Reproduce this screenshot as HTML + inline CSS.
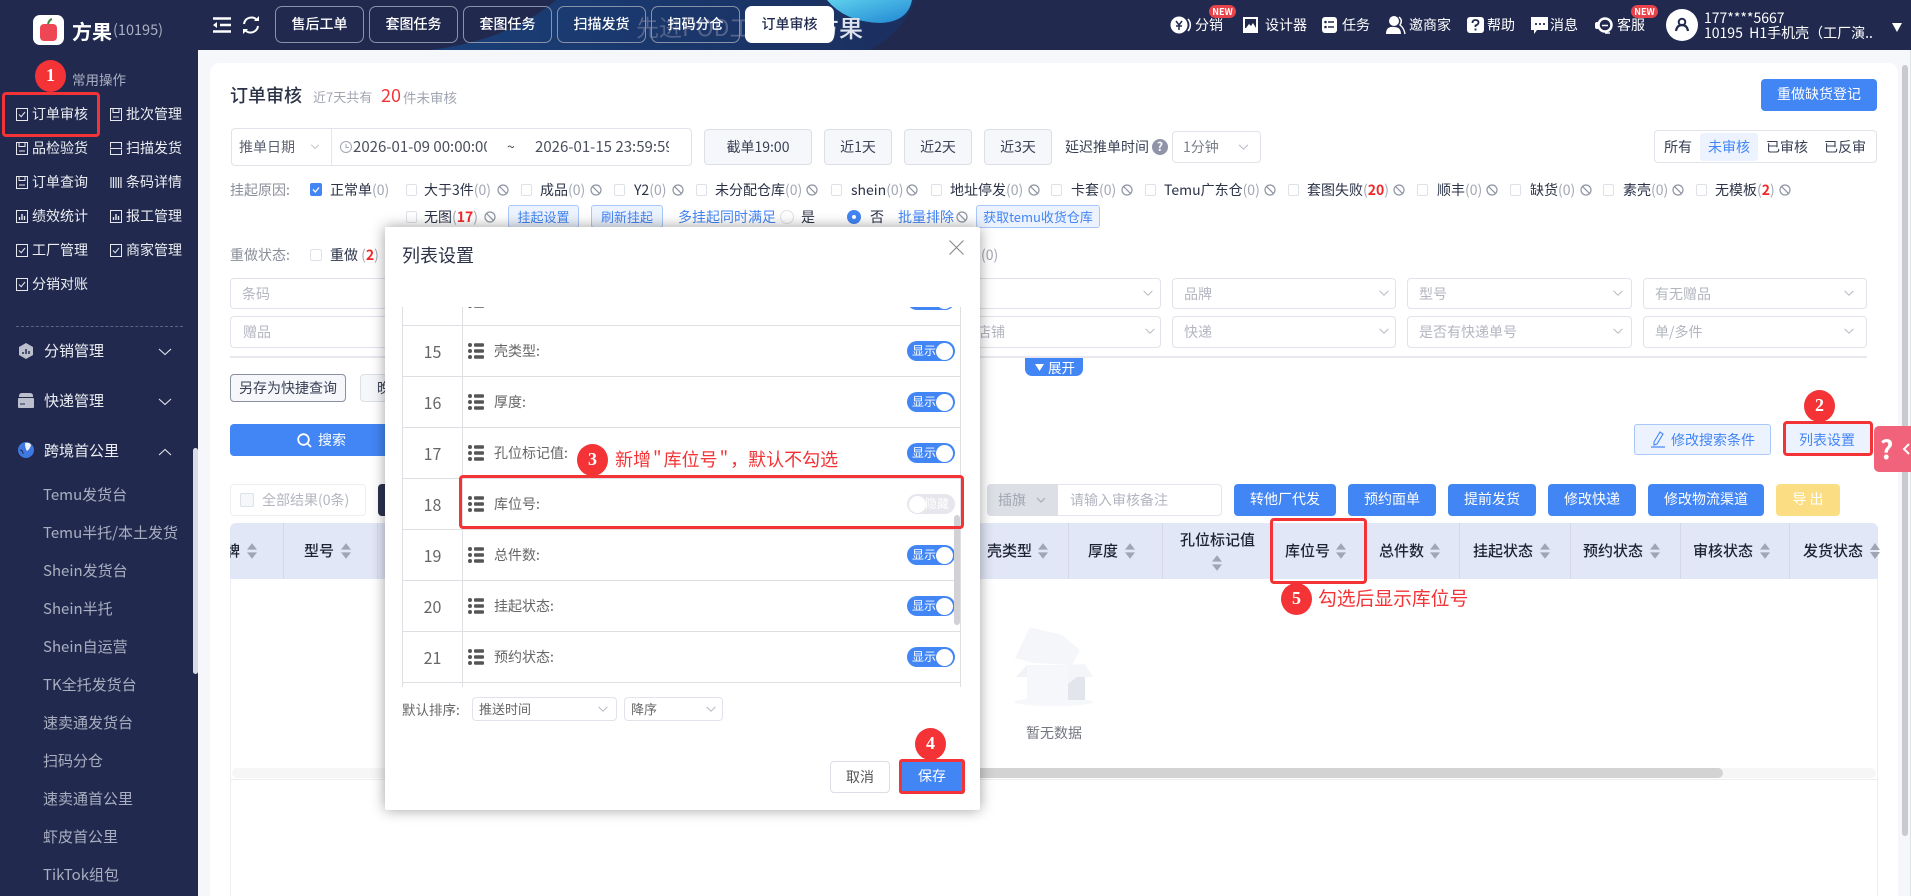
<!DOCTYPE html>
<html lang="zh"><head><meta charset="utf-8"><title>订单审核</title>
<style>
*{box-sizing:border-box;margin:0;padding:0}
html,body{width:1911px;height:896px;overflow:hidden;background:#f5f7fb;font-family:"Noto Sans CJK SC","Liberation Sans",sans-serif;font-size:14px;color:#2b3247}
.t{position:absolute;white-space:nowrap;line-height:20px;height:20px}
.b{position:absolute}
svg{position:absolute;overflow:visible}
.side{color:#eceef3}
.sub{color:#a9afc0;left:43px;font-size:15px}
.tab{position:absolute;top:6px;height:37px;width:89px;border:1px solid #8a92a8;border-radius:7px;color:#fff;text-align:center;line-height:34px;font-weight:500}
.tab.on{background:#fff;color:#20294d;border-color:#fff}
.hd{color:#fff;font-size:14px;top:15px}
.new{position:absolute;top:5px;width:27px;height:13px;border-radius:7px;background:#e8434a;color:#fff;font-size:9px;line-height:13px;text-align:center;font-weight:700}
.cb{position:absolute;width:11px;height:12px;border:1px solid #dfe1e8;border-radius:2px;background:#fff}
.g{color:#a2a6b2}.r{color:#f22828;font-weight:700}
.btn{position:absolute;background:#f5f7fb;border:1px solid #dcdfe6;border-radius:4px;text-align:center;color:#3a4054}
.blue{position:absolute;background:#4285f4;border-radius:4px;color:#fff;text-align:center;height:32px;line-height:31px;top:484px}
.lb{position:absolute;background:#edf3fe;border:1px solid #a9c8fa;border-radius:3px;color:#4285f4;text-align:center;font-size:13px;top:205px;height:23px;line-height:21px}
.in{position:absolute;border:1px solid #e1e2ea;border-radius:4px;background:#fff;color:#b3b6c0}
.in span{position:absolute;left:11px;top:5px;line-height:20px}
.th{color:#1d2333;font-size:15px;font-weight:500;top:541px}
.sp{position:absolute;top:523px;width:1px;height:56px;background:#d5d9e6}
.m{position:absolute;background:#fff}
.num{position:absolute;left:403px;width:59px;text-align:center;color:#666;font-size:16px;line-height:20px}
.lab{position:absolute;left:494px;color:#666;font-size:14px;line-height:20px;white-space:nowrap}
.tg{position:absolute;left:907px;width:48px;height:20px;border-radius:10px;background:#4285f4;color:#fff;font-size:12px;line-height:20px;padding-left:5px}
.tg:after{content:"";position:absolute;right:2px;top:1.5px;width:17px;height:17px;border-radius:50%;background:#fff}
.tg.off{background:#e6e6ec;color:#fff;padding-left:18px}
.tg.off:after{right:auto;left:2px}
.hl{position:absolute;left:403px;width:557px;height:1px;background:#dedfe3}
.c{position:absolute;background:#f33336;border-radius:50%;color:#fff;text-align:center;font:700 18px/31px "Liberation Serif","Noto Serif CJK SC",serif;width:31px;height:32px}
.rb{position:absolute;border:3px solid #f33336;border-radius:4px}
.rt{position:absolute;color:#f33336;font-size:18px;line-height:24px;white-space:nowrap}
</style></head><body>
<svg width="0" height="0" style="position:absolute"><defs>
<symbol id="ban" viewBox="0 0 12 12"><circle cx="6" cy="6" r="5" fill="none" stroke="#8f94a3" stroke-width="1.2"/><path d="M2.6 2.6l6.8 6.8" stroke="#8f94a3" stroke-width="1.2"/></symbol>
<symbol id="ch" viewBox="0 0 12 8"><path d="M1 1l5 5 5-5" fill="none" stroke="#b4b7c1" stroke-width="1.1"/></symbol>
<symbol id="sort" viewBox="0 0 11 17"><path d="M5.5 0L11 7H0zM5.5 17L0 10h11z" fill="#a0a5b4"/></symbol>
<symbol id="drag" viewBox="0 0 16 16"><g fill="#555"><circle cx="2" cy="2" r="2"/><circle cx="2" cy="8" r="2"/><circle cx="2" cy="14" r="2"/><rect x="6" y=".2" width="10" height="3.6" rx="1"/><rect x="6" y="6.2" width="10" height="3.6" rx="1"/><rect x="6" y="12.2" width="10" height="3.6" rx="1"/></g></symbol>
<symbol id="ck" viewBox="0 0 12 13"><rect x=".5" y=".5" width="11" height="12" fill="none" stroke="#e6e8ee"/><path d="M3 6.5l2.2 2.2L9 4" fill="none" stroke="#e6e8ee"/></symbol>
<symbol id="bk" viewBox="0 0 12 13"><rect x=".5" y=".5" width="11" height="12" fill="none" stroke="#e6e8ee"/><path d="M3 .5v4h6v-4M3 9h6" fill="none" stroke="#e6e8ee"/></symbol>
<symbol id="sc" viewBox="0 0 12 13"><path d="M.5 5.5v-5h11v5M.5 7.5v5h11v-5M0 6.5h12" fill="none" stroke="#e6e8ee"/></symbol>
<symbol id="bar" viewBox="0 0 12 13"><path d="M1 1v11M3.5 1v11M6 1v11M8.5 1v11M11 1v11" stroke="#e6e8ee" stroke-width="1.2"/></symbol>
<symbol id="st" viewBox="0 0 12 13"><rect x=".5" y=".5" width="11" height="12" fill="none" stroke="#e6e8ee"/><path d="M3.5 10V7M6 10V4M8.5 10V6" stroke="#e6e8ee" stroke-width="1.4"/></symbol>
</defs></svg>

<!-- header -->
<div class="b" style="left:0;top:0;width:1911px;height:50px;background:#212a4e"></div>
<svg style="left:0;top:0" width="1911" height="50"><defs><linearGradient id="gd" x1="0" x2="1" y1="0" y2="0"><stop offset="0" stop-color="#1a3f78"/><stop offset="1" stop-color="#1b2f5e"/></linearGradient><linearGradient id="gl" x1="0" x2="1" y1="0" y2="1"><stop offset="0" stop-color="#5fd0ee"/><stop offset="1" stop-color="#1f86d2"/></linearGradient></defs>
<path d="M430 50Q510 40 556 0H915Q905 30 870 50Z" fill="url(#gd)"/><path d="M827 0H912Q908 22 880 23Q845 22 827 0Z" fill="url(#gl)"/></svg>
<div class="t" style="left:636px;top:16px;font-size:23px;color:#56638a">先进POD工厂</div>
<div class="t" style="left:815px;top:15px;font-size:24px;line-height:24px;height:24px;color:#dfe3ee;font-weight:500">方果</div>

<div class="b" style="left:33px;top:15px;width:31px;height:30px;background:#fff;border-radius:7px"></div>
<svg style="left:33px;top:15px" width="31" height="30"><rect x="7" y="9" width="17" height="17" rx="4" fill="#ef4655"/><path d="M15 9q1-4 4-5" fill="none" stroke="#3f8a3c" stroke-width="2"/></svg>
<div class="t" style="left:72px;top:21px;font-size:20px;font-weight:700;color:#fff">方果</div>
<div class="t" style="left:113px;top:20px;font-size:14.5px;color:#aab0c2">(10195)</div>
<svg style="left:213px;top:17px" width="18" height="16"><path d="M0 1.5h18M7 8h11M0 14.5h18" stroke="#fff" stroke-width="2.4"/><path d="M0 8l4-3v6z" fill="#fff"/></svg>
<svg style="left:242px;top:16px" width="18" height="18"><path d="M15 4A7.5 7.5 0 0 0 2 8M3 14a7.5 7.5 0 0 0 13-4" fill="none" stroke="#fff" stroke-width="2"/><path d="M12 5h5V0zM6 13H1v5z" fill="#fff"/></svg>
<div class="tab" style="left:275px">售后工单</div>
<div class="tab" style="left:369px">套图任务</div>
<div class="tab" style="left:463px">套图任务</div>
<div class="tab" style="left:557px">扫描发货</div>
<div class="tab" style="left:651px">扫码分仓</div>
<div class="tab on" style="left:745px">订单审核</div>

<svg style="left:1170px;top:16px" width="22" height="18"><circle cx="9" cy="9" r="8.5" fill="#fff"/><path d="M18 3a9 9 0 0 1 0 12" fill="none" stroke="#fff" stroke-width="1.6"/><path d="M6 5l3 4 3-4M9 9v5M6 10h6" fill="none" stroke="#212a4e" stroke-width="1.5"/></svg>
<div class="t hd" style="left:1195px">分销</div><div class="new" style="left:1209px">NEW</div>
<svg style="left:1243px;top:17px" width="15" height="16"><rect width="15" height="16" fill="#fff"/><rect x="2" y="2" width="11" height="9" fill="#212a4e"/><path d="M3 11l3-4 2 2 2-3 3 5z" fill="#fff"/></svg>
<div class="t hd" style="left:1265px">设计器</div>
<svg style="left:1322px;top:17px" width="15" height="16"><rect width="15" height="16" rx="3" fill="#fff"/><path d="M6 5h6M6 10h6" stroke="#212a4e" stroke-width="1.6"/><circle cx="3.5" cy="5" r="1.3" fill="#212a4e"/><circle cx="3.5" cy="10" r="1.3" fill="#212a4e"/></svg>
<div class="t hd" style="left:1342px">任务</div>
<svg style="left:1386px;top:16px" width="20" height="18"><circle cx="8" cy="5" r="5" fill="#fff"/><path d="M0 18q0-8 8-7q7 0 7 7z" fill="#fff"/><path d="M13 1q4 3 1 8q4 3 5 9" fill="none" stroke="#fff" stroke-width="1.4"/></svg>
<div class="t hd" style="left:1409px">邀商家</div>
<svg style="left:1467px;top:17px" width="17" height="16"><rect width="17" height="16" rx="3" fill="#fff"/><path d="M5.5 6q0-3 3-3t3 2.500q0 2-3 3v1.500M8.500 11.500v2" fill="none" stroke="#212a4e" stroke-width="1.8"/></svg>
<div class="t hd" style="left:1487px">帮助</div>
<svg style="left:1531px;top:17px" width="17" height="17"><path d="M0 0h17v13H6l-3 4v-4H0z" fill="#fff"/><path d="M4 7h2M8 7h2M12 7h2" stroke="#212a4e" stroke-width="1.8"/></svg>
<div class="t hd" style="left:1550px">消息</div>
<svg style="left:1595px;top:16px" width="19" height="18"><circle cx="10" cy="9" r="6.500" fill="none" stroke="#fff" stroke-width="2.500"/><rect x="0" y="6" width="4" height="7" rx="2" fill="#fff"/><path d="M7 9.500h6" stroke="#fff" stroke-width="1.500"/><path d="M10 17h5" stroke="#fff" stroke-width="1.500"/></svg>
<div class="t hd" style="left:1617px">客服</div><div class="new" style="left:1631px">NEW</div>
<div class="b" style="left:1666px;top:9px;width:32px;height:32px;border-radius:50%;background:#fff"></div>
<svg style="left:1675px;top:17px" width="14" height="15"><circle cx="7" cy="5" r="3.300" fill="none" stroke="#212a4e" stroke-width="2"/><path d="M1 14q1-6 6-6t6 6" fill="none" stroke="#212a4e" stroke-width="2.200"/></svg>
<div class="t" style="left:1704px;top:8px;color:#fff;font-size:14px">177****5667</div>
<div class="t" style="left:1704px;top:23px;color:#fff;font-size:14px;width:170px;overflow:hidden">10195&nbsp; H1手机壳（工厂演...</div>
<svg style="left:1892px;top:23px" width="10" height="9"><path d="M0 0h10L5 9z" fill="#fff"/></svg>

<!-- sidebar -->
<div class="b" style="left:0;top:50px;width:198px;height:846px;background:#212a4e"></div>
<div class="t" style="left:72px;top:69px;color:#aab0c2;font-size:13.500px">常用操作</div>
<svg style="left:16px;top:108px" width="12" height="13"><use href="#ck"/></svg><div class="t side" style="left:32px;top:104px">订单审核</div>
<svg style="left:110px;top:108px" width="12" height="13"><use href="#bk"/></svg><div class="t side" style="left:126px;top:104px">批次管理</div>
<svg style="left:16px;top:142px" width="12" height="13"><use href="#bk"/></svg><div class="t side" style="left:32px;top:138px">品检验货</div>
<svg style="left:110px;top:142px" width="12" height="13"><use href="#sc"/></svg><div class="t side" style="left:126px;top:138px">扫描发货</div>
<svg style="left:16px;top:176px" width="12" height="13"><use href="#bk"/></svg><div class="t side" style="left:32px;top:172px">订单查询</div>
<svg style="left:110px;top:176px" width="12" height="13"><use href="#bar"/></svg><div class="t side" style="left:126px;top:172px">条码详情</div>
<svg style="left:16px;top:210px" width="12" height="13"><use href="#st"/></svg><div class="t side" style="left:32px;top:206px">绩效统计</div>
<svg style="left:110px;top:210px" width="12" height="13"><use href="#st"/></svg><div class="t side" style="left:126px;top:206px">报工管理</div>
<svg style="left:16px;top:244px" width="12" height="13"><use href="#ck"/></svg><div class="t side" style="left:32px;top:240px">工厂管理</div>
<svg style="left:110px;top:244px" width="12" height="13"><use href="#ck"/></svg><div class="t side" style="left:126px;top:240px">商家管理</div>
<svg style="left:16px;top:278px" width="12" height="13"><use href="#ck"/></svg><div class="t side" style="left:32px;top:274px">分销对账</div>
<div class="b" style="left:16px;top:326px;width:167px;border-top:1px dashed #5b6480"></div>

<svg style="left:19px;top:343px" width="14" height="16"><path d="M7 0l7 4v8l-7 4-7-4V4z" fill="#bcc0cc"/><path d="M4 11V9M7 11V6M10 11V8" stroke="#212a4e" stroke-width="1.500"/></svg>
<div class="t side" style="left:44px;top:341px;font-size:15px">分销管理</div>
<svg style="left:159px;top:348px" width="12" height="8"><path d="M0 1l6 5.500L12 1" fill="none" stroke="#e3e5ec" stroke-width="1.100"/></svg>
<svg style="left:18px;top:393px" width="16" height="15"><path d="M1 3q0-3 3-3h8q3 0 3 3v1H1z" fill="#bcc0cc"/><rect x="0" y="5" width="16" height="10" rx="1" fill="#bcc0cc"/><path d="M2 11h5" stroke="#212a4e"/></svg>
<div class="t side" style="left:44px;top:391px;font-size:15px">快递管理</div>
<svg style="left:159px;top:398px" width="12" height="8"><path d="M0 1l6 5.500L12 1" fill="none" stroke="#e3e5ec" stroke-width="1.100"/></svg>
<svg style="left:18px;top:442px" width="16" height="16"><circle cx="8" cy="8" r="8" fill="#3f78e0"/><path d="M7 1q5-1 6 2q-1 4-4 6Q7 6 7 1z" fill="#f1f3f8"/><path d="M2 8q3 0 3 4" fill="none" stroke="#212a4e"/></svg>
<div class="t side" style="left:44px;top:441px;font-size:15px">跨境首公里</div>
<svg style="left:159px;top:448px" width="12" height="8"><path d="M0 7L6 1.500 12 7" fill="none" stroke="#e3e5ec" stroke-width="1.100"/></svg>
<div class="t sub" style="top:485px">Temu发货台</div>
<div class="t sub" style="top:523px">Temu半托/本土发货</div>
<div class="t sub" style="top:561px">Shein发货台</div>
<div class="t sub" style="top:599px">Shein半托</div>
<div class="t sub" style="top:637px">Shein自运营</div>
<div class="t sub" style="top:675px">TK全托发货台</div>
<div class="t sub" style="top:713px">速卖通发货台</div>
<div class="t sub" style="top:751px">扫码分仓</div>
<div class="t sub" style="top:789px">速卖通首公里</div>
<div class="t sub" style="top:827px">虾皮首公里</div>
<div class="t sub" style="top:865px">TikTok组包</div>
<div class="b" style="left:193px;top:448px;width:5px;height:226px;border-radius:3px;background:#d9dce4"></div>

<!-- card -->
<div class="b" style="left:210px;top:63px;width:1688px;height:833px;background:#fff;border-radius:10px 10px 0 0"></div>
<div class="b" style="left:1902px;top:65px;width:6px;height:771px;background:#c9c9cf;border-radius:3px"></div>
<div class="b" style="left:1910px;top:50px;width:1px;height:846px;background:#dfe5e5"></div>

<div class="t" style="left:230px;top:85px;font-size:18px;color:#2b3247;font-weight:500">订单审核</div>
<div class="t" style="left:313px;top:87px;font-size:13px;color:#a2a6b2">近7天共有</div>
<div class="t" style="left:381px;top:85px;font-size:18px;color:#f33336">20</div>
<div class="t" style="left:403px;top:87px;font-size:13.500px;color:#a2a6b2">件未审核</div>
<div class="b" style="left:1761px;top:79px;width:116px;height:32px;background:#4285f4;border-radius:4px;color:#fff;text-align:center;line-height:31px">重做缺货登记</div>

<!-- date row -->
<div class="in" style="left:231px;top:128px;width:461px;height:38px"></div>
<div class="b" style="left:331px;top:129px;width:1px;height:36px;background:#e4e5ee"></div>
<div class="t" style="left:239px;top:137px;color:#5c6170">推单日期</div>
<svg style="left:310px;top:144px" width="10" height="6"><use href="#ch"/></svg>
<svg style="left:340px;top:141px" width="12" height="12"><circle cx="6" cy="6" r="5.500" fill="none" stroke="#a2a6b2"/><path d="M6 3v3.500h3" fill="none" stroke="#a2a6b2"/></svg>
<div class="t" style="left:353px;top:137px;width:134px;overflow:hidden;color:#4a4f5e;font-size:15px">2026-01-09 00:00:00</div>
<div class="t" style="left:507px;top:137px;color:#4a4f5e">~</div>
<div class="t" style="left:535px;top:137px;width:134px;overflow:hidden;color:#4a4f5e;font-size:15px">2026-01-15 23:59:59</div>
<div class="btn" style="left:704px;top:129px;width:108px;height:36px;line-height:34px">截单19:00</div>
<div class="btn" style="left:824px;top:129px;width:68px;height:36px;line-height:34px">近1天</div>
<div class="btn" style="left:904px;top:129px;width:68px;height:36px;line-height:34px">近2天</div>
<div class="btn" style="left:984px;top:129px;width:68px;height:36px;line-height:34px">近3天</div>
<div class="t" style="left:1065px;top:137px;color:#3a4054">延迟推单时间</div>
<div class="b" style="left:1152px;top:139px;width:16px;height:16px;border-radius:50%;background:#8f94a8;color:#fff;font-size:12px;line-height:16px;text-align:center;font-weight:700">?</div>
<div class="in" style="left:1172px;top:131px;width:89px;height:32px"></div>
<div class="t" style="left:1183px;top:137px;color:#7a7e8a">1分钟</div>
<svg style="left:1238px;top:144px" width="11" height="7"><use href="#ch"/></svg>
<div class="in" style="left:1654px;top:130px;width:223px;height:33px"></div>
<div class="b" style="left:1700px;top:133px;width:58px;height:28px;border-radius:3px;background:#edf3fe"></div>
<div class="t" style="left:1664px;top:137px;color:#3a4054">所有</div>
<div class="t" style="left:1708px;top:137px;color:#4285f4">未审核</div>
<div class="t" style="left:1766px;top:137px;color:#3a4054">已审核</div>
<div class="t" style="left:1824px;top:137px;color:#3a4054">已反审</div>

<!-- suspend reasons -->
<div class="t" style="left:230px;top:180px;color:#8a8e9a">挂起原因:</div>
<div class="b" style="left:310px;top:183px;width:12px;height:13px;border-radius:2px;background:#4285f4"></div>
<svg style="left:310px;top:183px" width="12" height="13"><path d="M3 6.500l2.300 2.500L9 4.500" fill="none" stroke="#fff" stroke-width="1.300"/></svg>
<div class="t" style="left:330px;top:180px">正常单<span class="g">(0)</span></div>

<div class="cb" style="left:406px;top:184px"></div><div class="t" style="left:424px;top:180px">大于3件<span class="g">(0)</span></div><svg style="left:497px;top:184px" width="12" height="12"><use href="#ban"/></svg>
<div class="cb" style="left:521px;top:184px"></div><div class="t" style="left:540px;top:180px">成品<span class="g">(0)</span></div><svg style="left:590px;top:184px" width="12" height="12"><use href="#ban"/></svg>
<div class="cb" style="left:614px;top:184px"></div><div class="t" style="left:634px;top:180px">Y2<span class="g">(0)</span></div><svg style="left:672px;top:184px" width="12" height="12"><use href="#ban"/></svg>
<div class="cb" style="left:696px;top:184px"></div><div class="t" style="left:715px;top:180px">未分配仓库<span class="g">(0)</span></div><svg style="left:806px;top:184px" width="12" height="12"><use href="#ban"/></svg>
<div class="cb" style="left:831px;top:184px"></div><div class="t" style="left:851px;top:180px">shein<span class="g">(0)</span></div><svg style="left:906px;top:184px" width="12" height="12"><use href="#ban"/></svg>
<div class="cb" style="left:931px;top:184px"></div><div class="t" style="left:950px;top:180px">地址停发<span class="g">(0)</span></div><svg style="left:1028px;top:184px" width="12" height="12"><use href="#ban"/></svg>
<div class="cb" style="left:1051px;top:184px"></div><div class="t" style="left:1071px;top:180px">卡套<span class="g">(0)</span></div><svg style="left:1121px;top:184px" width="12" height="12"><use href="#ban"/></svg>
<div class="cb" style="left:1145px;top:184px"></div><div class="t" style="left:1164px;top:180px">Temu广东仓<span class="g">(0)</span></div><svg style="left:1264px;top:184px" width="12" height="12"><use href="#ban"/></svg>
<div class="cb" style="left:1288px;top:184px"></div><div class="t" style="left:1307px;top:180px">套图失败<span class="g">(</span><span class="r">20</span><span class="g">)</span></div><svg style="left:1393px;top:184px" width="12" height="12"><use href="#ban"/></svg>
<div class="cb" style="left:1417px;top:184px"></div><div class="t" style="left:1437px;top:180px">顺丰<span class="g">(0)</span></div><svg style="left:1486px;top:184px" width="12" height="12"><use href="#ban"/></svg>
<div class="cb" style="left:1510px;top:184px"></div><div class="t" style="left:1530px;top:180px">缺货<span class="g">(0)</span></div><svg style="left:1580px;top:184px" width="12" height="12"><use href="#ban"/></svg>
<div class="cb" style="left:1603px;top:184px"></div><div class="t" style="left:1623px;top:180px">素壳<span class="g">(0)</span></div><svg style="left:1672px;top:184px" width="12" height="12"><use href="#ban"/></svg>
<div class="cb" style="left:1696px;top:184px"></div><div class="t" style="left:1715px;top:180px">无模板<span class="g">(</span><span class="r">2</span><span class="g">)</span></div><svg style="left:1779px;top:184px" width="12" height="12"><use href="#ban"/></svg>

<div class="cb" style="left:406px;top:211px"></div><div class="t" style="left:424px;top:207px">无图<span class="g">(</span><span class="r">17</span><span class="g">)</span></div><svg style="left:484px;top:211px" width="12" height="12"><use href="#ban"/></svg>
<div class="lb" style="left:508px;width:71px">挂起设置</div>
<div class="lb" style="left:591px;width:72px">刷新挂起</div>
<div class="t" style="left:678px;top:207px;color:#4285f4">多挂起同时满足</div>
<div class="b" style="left:780px;top:210px;width:14px;height:14px;border-radius:50%;border:1px solid #dfe1e8"></div>
<div class="t" style="left:801px;top:207px">是</div>
<div class="b" style="left:847px;top:210px;width:14px;height:14px;border-radius:50%;background:#4285f4"></div>
<div class="b" style="left:852px;top:215px;width:4px;height:4px;border-radius:50%;background:#fff"></div>
<div class="t" style="left:870px;top:207px">否</div>
<div class="t" style="left:898px;top:207px;color:#4285f4">批量排除</div><svg style="left:956px;top:211px" width="12" height="12"><use href="#ban"/></svg>
<div class="lb" style="left:976px;width:124px">获取temu收货仓库</div>

<!-- redo -->
<div class="t" style="left:230px;top:245px;color:#8a8e9a">重做状态:</div>
<div class="cb" style="left:310px;top:249px;width:12px"></div>
<div class="t" style="left:330px;top:245px">重做 <span class="g">(</span><span class="r">2</span><span class="g">)</span></div>
<div class="t g" style="left:981px;top:245px">(0)</div>

<!-- filter rows -->
<div class="in" style="left:230px;top:278px;width:931px;height:31px"><span>条码</span></div>
<svg style="left:1142px;top:290px" width="12" height="7"><use href="#ch"/></svg>
<div class="in" style="left:1172px;top:278px;width:224px;height:31px"><span>品牌</span></div><svg style="left:1378px;top:290px" width="12" height="7"><use href="#ch"/></svg>
<div class="in" style="left:1407px;top:278px;width:225px;height:31px"><span>型号</span></div><svg style="left:1612px;top:290px" width="12" height="7"><use href="#ch"/></svg>
<div class="in" style="left:1643px;top:278px;width:224px;height:31px"><span>有无赠品</span></div><svg style="left:1843px;top:290px" width="12" height="7"><use href="#ch"/></svg>
<div class="in" style="left:230px;top:316px;width:931px;height:32px"><span style="left:12px">赠品</span><span style="left:746px">店铺</span></div>
<svg style="left:1144px;top:328px" width="12" height="7"><use href="#ch"/></svg>
<div class="in" style="left:1172px;top:316px;width:224px;height:32px"><span>快递</span></div><svg style="left:1378px;top:328px" width="12" height="7"><use href="#ch"/></svg>
<div class="in" style="left:1407px;top:316px;width:225px;height:32px"><span>是否有快递单号</span></div><svg style="left:1612px;top:328px" width="12" height="7"><use href="#ch"/></svg>
<div class="in" style="left:1643px;top:316px;width:224px;height:32px"><span>单/多件</span></div><svg style="left:1843px;top:328px" width="12" height="7"><use href="#ch"/></svg>
<div class="b" style="left:230px;top:356px;width:1637px;height:2px;background:#e8e8ee"></div>
<div class="b" style="left:1025px;top:358px;width:58px;height:18px;background:#4285f4;border-radius:0 0 7px 7px"></div>
<svg style="left:1035px;top:364px" width="9" height="7"><path d="M0 0h9L4.500 7z" fill="#fff"/></svg>
<div class="t" style="left:1048px;top:357px;color:#fff;font-size:13.500px">展开</div>

<!-- action row -->
<div class="btn" style="left:230px;top:374px;width:116px;height:28px;line-height:26px;border-color:#8a90a0">另存为快捷查询</div>
<div class="btn" style="left:360px;top:374px;width:100px;height:28px;line-height:26px;text-align:left;padding-left:16px">晚</div>
<div class="b" style="left:230px;top:424px;width:200px;height:32px;background:#4285f4;border-radius:4px"></div>
<svg style="left:297px;top:433px" width="15" height="15"><circle cx="6.500" cy="6.500" r="5.300" fill="none" stroke="#fff" stroke-width="1.800"/><path d="M10.500 10.500l3.500 3.500" stroke="#fff" stroke-width="1.800"/></svg>
<div class="t" style="left:318px;top:430px;color:#fff">搜索</div>
<div class="b" style="left:1634px;top:424px;width:137px;height:31px;background:#edf3fe;border:1px solid #a9c8fa;border-radius:3px"></div>
<svg style="left:1651px;top:431px" width="14" height="17"><path d="M3 11L9 1l3 2-6 10-3 1z" fill="none" stroke="#4285f4" stroke-width="1.100"/><path d="M0 16h14" stroke="#4285f4" stroke-width="1.200"/></svg>
<div class="t" style="left:1671px;top:430px;color:#4285f4">修改搜索条件</div>
<div class="b" style="left:1785px;top:423px;width:86px;height:31px;background:#edf3fe"></div>
<div class="t" style="left:1799px;top:430px;color:#4285f4">列表设置</div>
<div class="b" style="left:1874px;top:426px;width:37px;height:46px;background:#f0637a;border-radius:5px 0 0 5px"></div>
<div class="t" style="left:1880px;top:437px;color:#fff;font-size:26px;font-weight:700;line-height:24px;height:24px">?</div>
<svg style="left:1903px;top:444px" width="7" height="10"><path d="M6 0L1 5l5 5" fill="none" stroke="#fff" stroke-width="2"/></svg>

<!-- toolbar -->
<div class="in" style="left:230px;top:484px;width:136px;height:32px;border-color:#eceef3"></div>
<div class="b" style="left:240px;top:493px;width:14px;height:14px;border:1px solid #dfe1e8;background:#f5f7fb;border-radius:2px"></div>
<div class="t" style="left:262px;top:490px;color:#b3b6c0">全部结果(0条)</div>
<div class="b" style="left:378px;top:484px;width:40px;height:32px;background:#2c3350;border-radius:4px"></div>
<div class="in" style="left:987px;top:484px;width:235px;height:32px;border-color:#e4e5ee"></div>
<div class="b" style="left:987px;top:484px;width:71px;height:32px;background:#dcdfe6;border-radius:4px 0 0 4px"></div>
<div class="t" style="left:998px;top:490px;color:#a2a6b2">插旗</div>
<svg style="left:1036px;top:497px" width="10" height="6"><path d="M1 1l4 4 4-4" fill="none" stroke="#a2a6b2"/></svg>
<div class="t" style="left:1070px;top:490px;color:#b3b6c0">请输入审核备注</div>
<div class="blue" style="left:1234px;width:102px">转他厂代发</div>
<div class="blue" style="left:1348px;width:88px">预约面单</div>
<div class="blue" style="left:1448px;width:88px">提前发货</div>
<div class="blue" style="left:1548px;width:88px">修改快递</div>
<div class="blue" style="left:1648px;width:116px">修改物流渠道</div>
<div class="blue" style="left:1776px;width:64px;background:#fbdd83">导 出</div>

<!-- table -->
<div class="b" style="left:230px;top:523px;width:1648px;height:56px;background:#e2e7f7;border-radius:6px 6px 0 0"></div>
<div class="sp" style="left:283px"></div><div class="sp" style="left:377px"></div>
<div class="sp" style="left:1068px"></div><div class="sp" style="left:1162px"></div><div class="sp" style="left:1271px"></div><div class="sp" style="left:1365px"></div><div class="sp" style="left:1459px"></div><div class="sp" style="left:1570px"></div><div class="sp" style="left:1680px"></div><div class="sp" style="left:1789px"></div>
<div class="t th" style="left:230px;width:10px;overflow:hidden"><span style="position:absolute;right:0">牌</span></div><svg style="left:247px;top:543px" width="10" height="16"><use href="#sort"/></svg>
<div class="t th" style="left:304px">型号</div><svg style="left:341px;top:543px" width="10" height="16"><use href="#sort"/></svg>
<div class="t th" style="left:987px">壳类型</div><svg style="left:1038px;top:543px" width="10" height="16"><use href="#sort"/></svg>
<div class="t th" style="left:1088px">厚度</div><svg style="left:1125px;top:543px" width="10" height="16"><use href="#sort"/></svg>
<div class="t th" style="left:1180px;top:530px">孔位标记值</div><svg style="left:1212px;top:555px" width="10" height="16"><use href="#sort"/></svg>
<div class="t th" style="left:1285px">库位号</div><svg style="left:1336px;top:543px" width="10" height="16"><use href="#sort"/></svg>
<div class="t th" style="left:1379px">总件数</div><svg style="left:1430px;top:543px" width="10" height="16"><use href="#sort"/></svg>
<div class="t th" style="left:1473px">挂起状态</div><svg style="left:1540px;top:543px" width="10" height="16"><use href="#sort"/></svg>
<div class="t th" style="left:1583px">预约状态</div><svg style="left:1650px;top:543px" width="10" height="16"><use href="#sort"/></svg>
<div class="t th" style="left:1693px">审核状态</div><svg style="left:1760px;top:543px" width="10" height="16"><use href="#sort"/></svg>
<div class="t th" style="left:1803px">发货状态</div><svg style="left:1870px;top:543px" width="8" height="16" viewBox="0 0 8 16"><path d="M5 0L10 7H0zM5 16L0 9h10z" fill="#a0a5b4"/></svg>
<div class="b" style="left:230px;top:579px;width:1px;height:317px;background:#eceef2"></div>
<div class="b" style="left:1877px;top:579px;width:1px;height:317px;background:#eceef2"></div>
<div class="b" style="left:232px;top:768px;width:1644px;height:10px;background:#f6f6f6;border-radius:5px"></div>
<div class="b" style="left:700px;top:768px;width:1023px;height:10px;background:#d3d3d3;border-radius:5px"></div>
<div class="b" style="left:230px;top:779px;width:1648px;height:1px;background:#eceef2"></div>
<svg style="left:980px;top:600px" width="160" height="160" viewBox="0 0 160 160"><ellipse cx="74" cy="102" rx="40" ry="4" fill="#f6f7fa"/><path d="M35 58L50 27l32 8 18 15-8 15-39-2z" fill="#f5f6f9"/><path d="M36 77l11-12v12z" fill="#f1f2f5"/><rect x="47" y="65" width="41" height="35" fill="#f6f7fa"/><rect x="88" y="77" width="17" height="23" fill="#e3e5ec"/><path d="M88 65l17-1 8 13H97l-9 7z" fill="#f4f5f8"/></svg>
<div class="t" style="left:1026px;top:723px;color:#73767f">暂无数据</div>

<!-- modal -->
<div class="b" style="left:385px;top:227px;width:595px;height:583px;background:#fff;box-shadow:0 0 14px rgba(0,0,0,.38);border-radius:2px"></div>
<div class="t" style="left:402px;top:245px;font-size:18px;color:#2b3247">列表设置</div>
<svg style="left:949px;top:240px" width="15" height="15"><path d="M.5.5l14 14M14.500.5l-14 14" stroke="#888" stroke-width="1.100"/></svg>
<div class="b" style="left:402px;top:307px;width:559px;height:380px;overflow:hidden;background:#fff">
 <div class="b" style="left:0;top:0;width:1px;height:380px;background:#dedfe3"></div>
 <div class="b" style="left:60px;top:0;width:1px;height:380px;background:#dedfe3"></div>
 <div class="b" style="left:558px;top:0;width:1px;height:380px;background:#dedfe3"></div>
 <div class="tg" style="left:505px;top:-17px"></div>
 <svg style="left:66px;top:-15px" width="16" height="16"><use href="#drag"/></svg>
</div>
<div class="hl" style="top:325px"></div><div class="hl" style="top:376px"></div><div class="hl" style="top:427px"></div><div class="hl" style="top:478px"></div><div class="hl" style="top:529px"></div><div class="hl" style="top:580px"></div><div class="hl" style="top:631px"></div><div class="hl" style="top:682px"></div>

<div class="num" style="top:341px">15</div><svg style="left:468px;top:343px" width="16" height="16"><use href="#drag"/></svg><div class="lab" style="top:341px">壳类型:</div><div class="tg" style="top:341px">显示</div>
<div class="num" style="top:392px">16</div><svg style="left:468px;top:394px" width="16" height="16"><use href="#drag"/></svg><div class="lab" style="top:392px">厚度:</div><div class="tg" style="top:392px">显示</div>
<div class="num" style="top:443px">17</div><svg style="left:468px;top:445px" width="16" height="16"><use href="#drag"/></svg><div class="lab" style="top:443px">孔位标记值:</div><div class="tg" style="top:443px">显示</div>
<div class="num" style="top:494px">18</div><svg style="left:468px;top:496px" width="16" height="16"><use href="#drag"/></svg><div class="lab" style="top:494px">库位号:</div><div class="tg off" style="top:494px">隐藏</div>
<div class="num" style="top:545px">19</div><svg style="left:468px;top:547px" width="16" height="16"><use href="#drag"/></svg><div class="lab" style="top:545px">总件数:</div><div class="tg" style="top:545px">显示</div>
<div class="num" style="top:596px">20</div><svg style="left:468px;top:598px" width="16" height="16"><use href="#drag"/></svg><div class="lab" style="top:596px">挂起状态:</div><div class="tg" style="top:596px">显示</div>
<div class="num" style="top:647px">21</div><svg style="left:468px;top:649px" width="16" height="16"><use href="#drag"/></svg><div class="lab" style="top:647px">预约状态:</div><div class="tg" style="top:647px">显示</div>
<div class="b" style="left:954px;top:515px;width:6px;height:110px;background:#d2d2d6;border-radius:3px"></div>

<div class="t" style="left:402px;top:699px;font-size:13.500px;color:#666">默认排序:</div>
<div class="in" style="left:472px;top:697px;width:145px;height:24px;color:#666;font-size:13px"><span style="left:6px;top:1px">推送时间</span></div><svg style="left:597px;top:706px" width="12" height="7"><use href="#ch"/></svg>
<div class="in" style="left:624px;top:697px;width:99px;height:24px;color:#666;font-size:13px"><span style="left:6px;top:1px">降序</span></div><svg style="left:705px;top:706px" width="12" height="7"><use href="#ch"/></svg>
<div class="b" style="left:830px;top:761px;width:60px;height:32px;border:1px solid #dcdfe6;border-radius:4px;text-align:center;line-height:30px;color:#555;background:#fff">取消</div>
<div class="b" style="left:899px;top:759px;width:66px;height:35px;background:#4285f4;border:3px solid #f33336;border-radius:3px;color:#fff;text-align:center;line-height:29px">保存</div>

<!-- annotations -->
<div class="rb" style="left:2px;top:92px;width:98px;height:45px"></div>
<div class="c" style="left:35px;top:60px">1</div>
<div class="rb" style="left:1783px;top:421px;width:90px;height:35px"></div>
<div class="c" style="left:1804px;top:390px">2</div>
<div class="rb" style="left:459px;top:475px;width:505px;height:54px"></div>
<div class="c" style="left:577px;top:444px">3</div>
<div class="rt" style="left:615px;top:447px">新增<span style="padding:0 2px">"</span>库位号<span style="padding:0 2px">"</span>，默认不勾选</div>
<div class="c" style="left:915px;top:728px">4</div>
<div class="rb" style="left:1270px;top:518px;width:97px;height:66px"></div>
<div class="c" style="left:1281px;top:583px">5</div>
<div class="rt" style="left:1318px;top:586px;font-size:18.800px">勾选后显示库位号</div>
</body></html>
